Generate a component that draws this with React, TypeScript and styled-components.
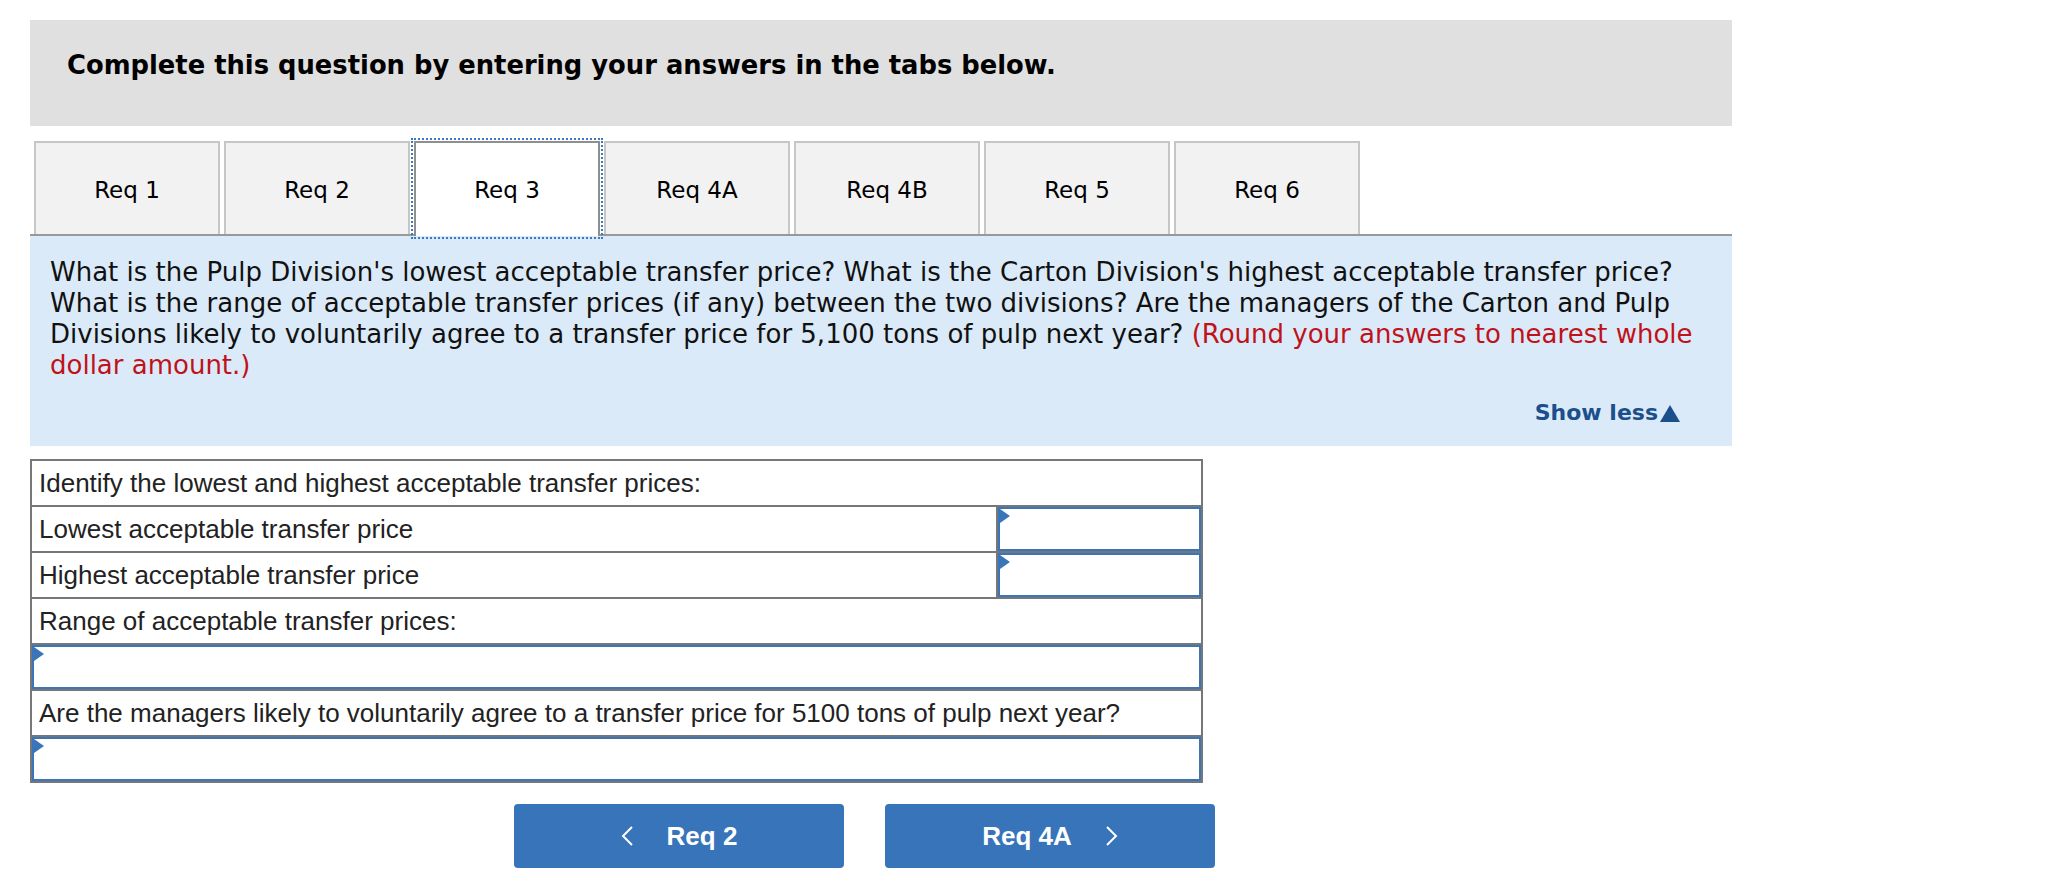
import React from "react";
import styled, { createGlobalStyle, css } from "styled-components";

const GlobalStyle = createGlobalStyle`
  html, body { margin: 0; padding: 0; background: #ffffff; }
  body { font-family: "DejaVu Sans", Verdana, sans-serif; color: #000; }
`;

const Page = styled.div`
  width: 1702px;
  padding: 20px 0 0 30px;
`;

const Header = styled.div`
  height: 106px;
  box-sizing: border-box;
  background: #e0e0e0;
  padding: 30px 37px 0;
  font-family: "DejaVu Sans", Verdana, sans-serif;
  font-weight: bold;
  font-size: 25.8px;
  line-height: 30px;
`;

const TabBar = styled.div`
  display: flex;
  gap: 4px;
  margin-top: 15px;
  padding: 0 4px;
  border-bottom: 2px solid #999999;
`;

const Tab = styled.div<{ $active?: boolean }>`
  width: 186px;
  height: 93px;
  box-sizing: border-box;
  display: flex;
  align-items: center;
  justify-content: center;
  font-family: "DejaVu Sans", Verdana, sans-serif;
  font-size: 23px;
  padding-top: 2px;
  background: #f2f2f2;
  border: 2px solid #c6c6c6;
  border-bottom: none;
  ${(p) =>
    p.$active &&
    css`
      background: #ffffff;
      border-color: #8f8f8f;
      outline: 2px dotted #3a78c3;
      outline-offset: 1px;
      position: relative;
      margin-bottom: -2px;
      height: 95px;
      padding-bottom: 2px;
    `}
`;

const QuestionPanel = styled.div`
  height: 210px;
  box-sizing: border-box;
  background: #dbeaf8;
  padding: 21px 8px 0 20px;
  display: flex;
  flex-direction: column;
`;

const QuestionText = styled.p`
  margin: 0;
  font-family: "DejaVu Sans", Verdana, sans-serif;
  font-size: 26px;
  line-height: 31px;
  color: #111;
`;

const Hint = styled.span`
  color: #c0121a;
`;

const ShowLess = styled.div`
  margin-top: 17px;
  align-self: flex-end;
  margin-right: 44px;
  display: flex;
  align-items: center;
  gap: 2px;
  font-family: "DejaVu Sans", Verdana, sans-serif;
  font-weight: bold;
  font-size: 22px;
  line-height: 30px;
  color: #1b4f8c;
`;

const Triangle = styled.span`
  display: inline-block;
  width: 0;
  height: 0;
  border-left: 10px solid transparent;
  border-right: 10px solid transparent;
  border-bottom: 17px solid #1b4f8c;
`;

const Table = styled.div`
  margin-top: 13px;
  width: 1173px;
  box-sizing: border-box;
  border: 2px solid #777777;
  display: flex;
  flex-direction: column;
`;

const Row = styled.div<{ $first?: boolean }>`
  display: flex;
  height: 46px;
  box-sizing: border-box;
  border-top: ${(p) => (p.$first ? "none" : "2px solid #777777")};
  ${(p) => p.$first && "height: 44px;"}
`;

const Label = styled.div`
  flex: 1;
  display: flex;
  align-items: center;
  padding-left: 7px;
  font-family: "Liberation Sans", Arial, sans-serif;
  font-size: 26px;
  color: #222222;
  white-space: nowrap;
`;

const InputCell = styled.div<{ $narrow?: boolean }>`
  position: relative;
  box-sizing: border-box;
  ${(p) =>
    p.$narrow
      ? css`
          width: 205px;
          border-left: 2px solid #777777;
        `
      : css`
          flex: 1;
        `}
`;

const InputBox = styled.div`
  position: relative;
  height: 100%;
  box-sizing: border-box;
  border: 2px solid #3a74b9;
  background: #ffffff;
`;

const Marker = styled.span`
  position: absolute;
  top: 0;
  left: 0;
  width: 0;
  height: 0;
  border-top: 7px solid transparent;
  border-bottom: 7px solid transparent;
  border-left: 10px solid #3a74b9;
`;

const ButtonRow = styled.div`
  display: flex;
  gap: 41px;
  margin-top: 21px;
  padding-left: 484px;
`;

const NavButton = styled.button`
  width: 330px;
  height: 64px;
  border: none;
  border-radius: 4px;
  background: #3774b9;
  color: #ffffff;
  display: flex;
  align-items: center;
  justify-content: center;
  gap: 33px;
  font-family: "Liberation Sans", Arial, sans-serif;
  font-weight: bold;
  font-size: 26px;
  cursor: pointer;
  padding: 0;
`;

const Chevron = ({ dir }: { dir: "left" | "right" }) => (
  <svg width="13" height="22" viewBox="0 0 13 22" fill="none">
    <polyline
      points={dir === "left" ? "11,2 2,11 11,20" : "2,2 11,11 2,20"}
      stroke="#ffffff"
      strokeWidth="2"
      fill="none"
    />
  </svg>
);

const Input = () => (
  <InputBox>
    <Marker />
  </InputBox>
);

const tabs = ["Req 1", "Req 2", "Req 3", "Req 4A", "Req 4B", "Req 5", "Req 6"];

export default function App() {
  return (
    <>
      <GlobalStyle />
      <Page>
        <Header>Complete this question by entering your answers in the tabs below.</Header>
        <TabBar>
          {tabs.map((t) => (
            <Tab key={t} $active={t === "Req 3"}>
              {t}
            </Tab>
          ))}
        </TabBar>
        <QuestionPanel>
          <QuestionText>
            What is the Pulp Division's lowest acceptable transfer price? What is the Carton Division's
            highest acceptable transfer price? What is the range of acceptable transfer prices (if any)
            between the two divisions? Are the managers of the Carton and Pulp Divisions likely to
            voluntarily agree to a transfer price for 5,100 tons of pulp next year?{" "}
            <Hint>(Round your answers to nearest whole dollar amount.)</Hint>
          </QuestionText>
          <ShowLess>
            Show less
            <Triangle />
          </ShowLess>
        </QuestionPanel>
        <Table>
          <Row $first>
            <Label>Identify the lowest and highest acceptable transfer prices:</Label>
          </Row>
          <Row>
            <Label>Lowest acceptable transfer price</Label>
            <InputCell $narrow>
              <Input />
            </InputCell>
          </Row>
          <Row>
            <Label>Highest acceptable transfer price</Label>
            <InputCell $narrow>
              <Input />
            </InputCell>
          </Row>
          <Row>
            <Label>Range of acceptable transfer prices:</Label>
          </Row>
          <Row>
            <InputCell>
              <Input />
            </InputCell>
          </Row>
          <Row>
            <Label>Are the managers likely to voluntarily agree to a transfer price for 5100 tons of pulp next year?</Label>
          </Row>
          <Row>
            <InputCell>
              <Input />
            </InputCell>
          </Row>
        </Table>
        <ButtonRow>
          <NavButton>
            <Chevron dir="left" />
            <span>Req 2</span>
          </NavButton>
          <NavButton>
            <span>Req 4A</span>
            <Chevron dir="right" />
          </NavButton>
        </ButtonRow>
      </Page>
    </>
  );
}
